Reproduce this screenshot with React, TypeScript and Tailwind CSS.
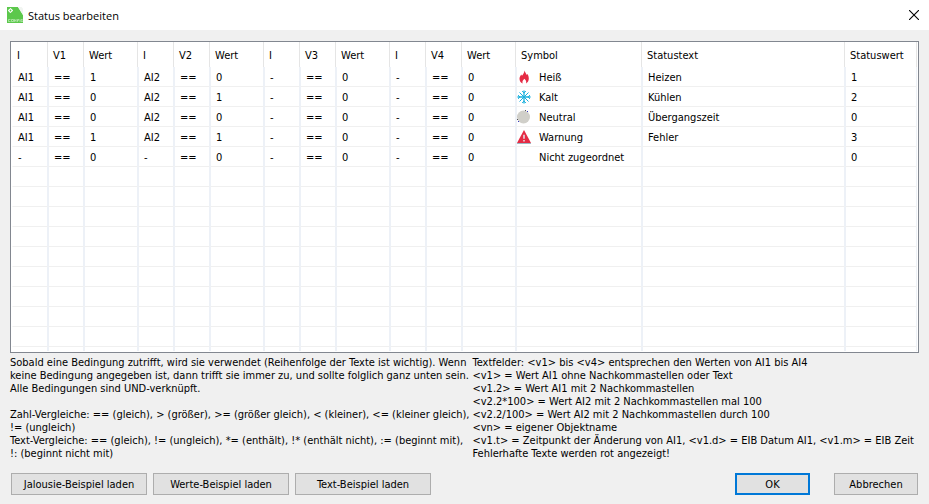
import React from 'react';

type SymbolName = 'Heiß' | 'Kalt' | 'Neutral' | 'Warnung' | 'Nicht zugeordnet';

interface StatusRow {
  conditions: string[];
  symbol: SymbolName;
  text: string;
  value: string;
}

const columns = ['I', 'V1', 'Wert', 'I', 'V2', 'Wert', 'I', 'V3', 'Wert', 'I', 'V4', 'Wert', 'Symbol', 'Statustext', 'Statuswert'];

const rows: StatusRow[] = [
  { conditions: ['AI1', '==', '1', 'AI2', '==', '0', '-', '==', '0', '-', '==', '0'], symbol: 'Heiß', text: 'Heizen', value: '1' },
  { conditions: ['AI1', '==', '0', 'AI2', '==', '1', '-', '==', '0', '-', '==', '0'], symbol: 'Kalt', text: 'Kühlen', value: '2' },
  { conditions: ['AI1', '==', '0', 'AI2', '==', '0', '-', '==', '0', '-', '==', '0'], symbol: 'Neutral', text: 'Übergangszeit', value: '0' },
  { conditions: ['AI1', '==', '1', 'AI2', '==', '1', '-', '==', '0', '-', '==', '0'], symbol: 'Warnung', text: 'Fehler', value: '3' },
  { conditions: ['-', '==', '0', '-', '==', '0', '-', '==', '0', '-', '==', '0'], symbol: 'Nicht zugeordnet', text: '', value: '0' }
];

const emptyRows = 9;

const conditionHelp = [
  'Sobald eine Bedingung zutrifft, wird sie verwendet (Reihenfolge der Texte ist wichtig). Wenn',
  'keine Bedingung angegeben ist, dann trifft sie immer zu, und sollte folglich ganz unten sein.',
  'Alle Bedingungen sind UND-verknüpft.',
  '',
  'Zahl-Vergleiche: == (gleich), > (größer), >= (größer gleich), < (kleiner), <= (kleiner gleich),',
  '!= (ungleich)',
  'Text-Vergleiche: == (gleich), != (ungleich), *= (enthält), !* (enthält nicht), := (beginnt mit),',
  '!: (beginnt nicht mit)'
];

const fieldHelp = [
  'Textfelder: <v1> bis <v4> entsprechen den Werten von AI1 bis AI4',
  '<v1> = Wert AI1 ohne Nachkommastellen oder Text',
  '<v1.2> = Wert AI1 mit 2 Nachkommastellen',
  '<v2.2*100> = Wert AI2 mit 2 Nachkommastellen mal 100',
  '<v2.2/100> = Wert AI2 mit 2 Nachkommastellen durch 100',
  '<vn> = eigener Objektname',
  '<v1.t> = Zeitpunkt der Änderung von AI1, <v1.d> = EIB Datum AI1, <v1.m> = EIB Zeit',
  'Fehlerhafte Texte werden rot angezeigt!'
];

const ConfigIcon: React.FC = () => (
  <svg viewBox="0 0 16 16" className="w-4 h-4" aria-hidden="true">
    <path d="M0 0h11l5 8v8H0z" fill="#5cc84c" />
    <path d="M11 0l5 8V1.5L14.5 0z" fill="#f1f5f1" />
    <circle cx="3.5" cy="3.5" r="1.5" fill="none" stroke="#fff" strokeWidth="1.2" />
    <path d="M3.5 1v1M3.5 5v1M1 3.5h1M5 3.5h1" stroke="#fff" strokeWidth="0.8" />
    <path d="M1.5 12.5h2M1.5 14.5h2M1.5 12.5v2M4.5 12.5h2v2h-2zM7.5 14.9v-2.4l1.6 2v-2.4M10.5 14.9v-2.4h1.6M10.5 13.6h1.2M13 12.3v2.6M14.2 12.5h1.5M14.2 12.5v2h1.5v-1" fill="none" stroke="#d9f3d4" strokeWidth="0.6" />
  </svg>
);

const StatusIcon: React.FC<{ name: SymbolName }> = ({ name }) => (
  <svg viewBox="0 0 14 14" className="w-3.5 h-3.5 shrink-0" aria-hidden="true">
    {name === 'Heiß' && (
      <path d="M7.5 0.5C8 2.5 9.200 3.500 9.800 5l.8-1c.8 1.700 1.200 3 1.200 4.600 0 2.300-1 4-2.800 4.900.6-1.700.1-3.200-1.600-4.700-1.800 1.600-2.300 3-1.700 4.700C3.700 12.700 2.500 11 2.500 8.800 2.500 7.200 3.400 6 4.200 4.600l.8 1.200C6.400 4.200 7.300 2.600 7.500.5z" fill="#e52b44" />
    )}
    {name === 'Kalt' && (
      <g fill="none" stroke="#1ab0dc">
        <path d="M7 0.500v13M0.500 7h13" strokeWidth="1.300" />
        <path d="M2.500 2.500l9 9M11.500 2.500l-9 9" strokeWidth="1" />
        <path d="M5 1l2 2 2-2M5 13l2-2 2 2M1 5l2 2-2 2M13 5l-2 2 2 2" strokeWidth="0.900" />
      </g>
    )}
    {name === 'Neutral' && (
      <>
        <circle cx="6.500" cy="7" r="6.500" fill="#d0cfc9" />
        <path d="M10 1h1v1h-1zM1 11h1v1H1z" fill="#3a3ac8" />
        <path d="M8 0h1v1H8zM0 9h1v1H0z" fill="#55555a" />
      </>
    )}
    {name === 'Warnung' && (
      <>
        <path d="M7 0L14 13H0z" fill="#e52b44" />
        <path d="M0 13.500h14" stroke="#9db9c4" strokeWidth="1" />
        <path d="M7 4.800v4M7 10v1.500" stroke="#e4f4f8" strokeWidth="1.400" />
      </>
    )}
  </svg>
);

const Cell: React.FC<{ children?: React.ReactNode }> = ({ children }) => (
  <td className="border-x border-b border-x-[#edf1f7] border-b-[#f0f0f0] p-0 pt-px pl-[5px] first:border-l-transparent">{children}</td>
);

const DialogButton: React.FC<{ label: string; className: string }> = ({ label, className }) => (
  <button type="button" className={`h-[22px] bg-[#e1e1e1] text-center whitespace-nowrap ${className}`}>
    {label}
  </button>
);

export default function App() {
  return (
    <div className="min-h-screen bg-[#f0f0f0] text-black text-[11px] leading-[13px] font-['DejaVu_Sans_Condensed',sans-serif]">
      {/* Title bar */}
      <header className="flex items-center h-[30px] bg-white pl-[7px] pr-2">
        <ConfigIcon />
        <h1 className="ml-[5px] grow font-['Open_Sans',sans-serif]">Status bearbeiten</h1>
        <button type="button" aria-label="Schließen" className="p-[2px]">
          <svg viewBox="0 0 10 10" className="w-2.5 h-2.5" aria-hidden="true">
            <path d="M0 0l10 10M10 0L0 10" stroke="#000" strokeWidth="1.100" />
          </svg>
        </button>
      </header>

      <main className="px-2.5 pt-[11px] pb-[9px]">
        {/* Status list */}
        <div className="border border-[#828790] bg-white px-px pb-px">
          <table className="w-full table-fixed border-separate border-spacing-0 text-left">
            <colgroup>
              {columns.slice(0, 12).map((name, i) => (
                <col key={i} className={name === 'Wert' ? 'w-[54px]' : 'w-9'} />
              ))}
              <col className="w-[126px]" />
              <col />
              <col className="w-[72px]" />
            </colgroup>
            <thead>
              <tr className="h-[25px]">
                {columns.map((name, i) => (
                  <th key={i} scope="col" className="border-r border-[#e5e5e5] p-0 pt-px pl-[5px] font-normal">{name}</th>
                ))}
              </tr>
            </thead>
            <tbody>
              {rows.map((row, i) => (
                <tr key={i} className="h-5">
                  {row.conditions.map((value, j) => (
                    <Cell key={j}>{value}</Cell>
                  ))}
                  <td className="border-x border-b border-x-[#edf1f7] border-b-[#f0f0f0] p-0 pt-px">
                    <span className="flex items-center gap-2">
                      <StatusIcon name={row.symbol} />
                      <span className="whitespace-nowrap">{row.symbol}</span>
                    </span>
                  </td>
                  <Cell>{row.text}</Cell>
                  <Cell>{row.value}</Cell>
                </tr>
              ))}
              {Array.from({ length: emptyRows }, (_, i) => (
                <tr key={i} className="h-5">
                  {columns.map((_name, j) => (
                    <Cell key={j} />
                  ))}
                </tr>
              ))}
              <tr className="h-1">
                {columns.map((_name, j) => (
                  <td key={j} className="border-x border-[#edf1f7] p-0 first:border-l-transparent" />
                ))}
              </tr>
            </tbody>
          </table>
        </div>

        {/* Help texts */}
        <div className="flex gap-[3px] pt-[3px] whitespace-nowrap">
          <div className="shrink-0">
            {conditionHelp.map((line, i) => (
              <p key={i} className="min-h-[13px]">{line}</p>
            ))}
          </div>
          <div>
            {fieldHelp.map((line, i) => (
              <p key={i} className="min-h-[13px]">{line}</p>
            ))}
          </div>
        </div>

        {/* Buttons */}
        <div className="flex justify-between pt-[13px] px-px">
          <div className="flex gap-1.5">
            <DialogButton label="Jalousie-Beispiel laden" className="w-[136px] border border-[#adadad]" />
            <DialogButton label="Werte-Beispiel laden" className="w-[136px] border border-[#adadad]" />
            <DialogButton label="Text-Beispiel laden" className="w-[136px] border border-[#adadad]" />
          </div>
          <div className="flex gap-6">
            <DialogButton label="OK" className="w-[75px] border-2 border-[#0078d7]" />
            <DialogButton label="Abbrechen" className="w-[84px] border border-[#adadad]" />
          </div>
        </div>
      </main>
    </div>
  );
}
